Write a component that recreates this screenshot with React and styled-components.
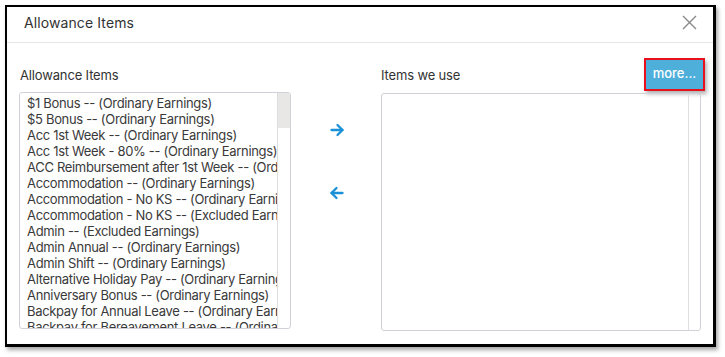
import React from "react";
import styled, { createGlobalStyle } from "styled-components";

const Global = createGlobalStyle`
  html, body { margin: 0; padding: 0; background: #fff; }
  body { font-family: Inter, "Noto Sans", sans-serif; }
`;

const Page = styled.div`
  padding: 5px 0 0 5px;
  width: 725px;
  height: 357px;
  box-sizing: border-box;
`;

const Dialog = styled.div`
  width: 711px;
  height: 342px;
  box-sizing: border-box;
  border: 2px solid #000;
  border-right-width: 3px;
  border-bottom-width: 3px;
  background: #fff;
  box-shadow: 2px 3px 4px rgba(0, 0, 0, 0.35);
  display: flex;
  flex-direction: column;
`;

const Header = styled.div`
  height: 36px;
  box-sizing: border-box;
  padding: 0 16px 4px 17px;
  border-bottom: 1px solid #e6e6e6;
  display: flex;
  align-items: center;
  justify-content: space-between;
`;

const Title = styled.div`
  font-size: 14px;
  color: #333;
  letter-spacing: 0.1px;
`;

const Close = styled.button`
  border: 0;
  background: none;
  padding: 0;
  width: 16px;
  height: 16px;
  display: flex;
  align-items: center;
  justify-content: center;
  color: #888;
`;

const Body = styled.div`
  display: grid;
  grid-template-columns: 272px 90px 320px;
  padding: 16px 0 0 12px;
`;

const Column = styled.div`
  display: flex;
  flex-direction: column;
`;

const ColHead = styled.div`
  height: 32px;
  display: flex;
  align-items: center;
  justify-content: space-between;
  margin-bottom: ${(p) => p.$gap}px;
`;

const Label = styled.div`
  font-size: 13px;
  color: #333;
  letter-spacing: -0.15px;
  padding-left: ${(p) => p.$pl || 0}px;
`;

const MoreButton = styled.button`
  margin-right: -4px;
  margin-top: -1px;
  box-sizing: border-box;
  width: 61px;
  height: 33px;
  border: 2px solid #e8101a;
  background: #4fafdb;
  color: #fff;
  font-family: inherit;
  font-size: 13px;
  font-weight: 500;
  padding: 0 0 4px 0;
  box-shadow: 2px 3px 4px rgba(0, 0, 0, 0.3);
`;

const ListBox = styled.div`
  height: ${(p) => p.$h}px;
  box-sizing: border-box;
  border: 1px solid #cfd2d8;
  border-radius: 3px;
  display: grid;
  grid-template-columns: 1fr ${(p) => p.$sw}px;
  overflow: hidden;
`;

const Items = styled.div`
  padding: 2px 0 0 7px;
  overflow: hidden;
`;

const Item = styled.div`
  font-size: 13px;
  line-height: 16px;
  height: 16px;
  letter-spacing: -0.32px;
  color: #3a3a3a;
  white-space: nowrap;
`;

const Track = styled.div`
  border-left: 1px solid #dedede;
  display: flex;
  flex-direction: column;
`;

const Thumb = styled.div`
  height: 35px;
  background: #e8e7e6;
`;

const Mid = styled.div`
  display: flex;
  flex-direction: column;
  align-items: center;
  padding-top: 63px;
  gap: 47px;
  padding-left: 2px;
`;

const ArrowBtn = styled.div`
  width: 16px;
  height: 16px;
  color: #1a90d6;
  display: flex;
`;

const Arrow = ({ dir }) => (
  <svg width="16" height="16" viewBox="0 0 16 16" fill="none" stroke="currentColor" strokeWidth="2.3" strokeLinecap="round" strokeLinejoin="round">
    {dir === "right" ? (
      <>
        <path d="M2.5 8h11" />
        <path d="M8.5 3l5 5-5 5" />
      </>
    ) : (
      <>
        <path d="M13.5 8h-11" />
        <path d="M7.5 3l-5 5 5 5" />
      </>
    )}
  </svg>
);

const items = [
  "$1 Bonus -- (Ordinary Earnings)",
  "$5 Bonus -- (Ordinary Earnings)",
  "Acc 1st Week -- (Ordinary Earnings)",
  "Acc 1st Week - 80% -- (Ordinary Earnings)",
  "ACC Reimbursement after 1st Week -- (Ordinary Earnings)",
  "Accommodation -- (Ordinary Earnings)",
  "Accommodation - No KS -- (Ordinary Earnings)",
  "Accommodation - No KS -- (Excluded Earnings)",
  "Admin -- (Excluded Earnings)",
  "Admin Annual -- (Ordinary Earnings)",
  "Admin Shift -- (Ordinary Earnings)",
  "Alternative Holiday Pay -- (Ordinary Earnings)",
  "Anniversary Bonus -- (Ordinary Earnings)",
  "Backpay for Annual Leave -- (Ordinary Earnings)",
  "Backpay for Bereavement Leave -- (Ordinary Earnings)",
];

export default function App() {
  return (
    <Page>
      <Global />
      <Dialog>
        <Header>
          <Title>Allowance Items</Title>
          <Close aria-label="close">
            <svg width="15" height="15" viewBox="0 0 15 15" stroke="currentColor" strokeWidth="1.4" fill="none">
              <path d="M1 1l13 13M14 1L1 14" />
            </svg>
          </Close>
        </Header>
        <Body>
          <Column>
            <ColHead $gap={1}>
              <Label $pl={1}>Allowance Items</Label>
            </ColHead>
            <ListBox $h={237} $sw={13}>
              <Items>
                {items.map((t) => (
                  <Item key={t}>{t}</Item>
                ))}
              </Items>
              <Track>
                <Thumb />
              </Track>
            </ListBox>
          </Column>
          <Mid>
            <ArrowBtn>
              <Arrow dir="right" />
            </ArrowBtn>
            <ArrowBtn>
              <Arrow dir="left" />
            </ArrowBtn>
          </Mid>
          <Column>
            <ColHead $gap={2}>
              <Label>Items we use</Label>
              <MoreButton>more...</MoreButton>
            </ColHead>
            <ListBox $h={238} $sw={12}>
              <Items />
              <Track />
            </ListBox>
          </Column>
        </Body>
      </Dialog>
    </Page>
  );
}
